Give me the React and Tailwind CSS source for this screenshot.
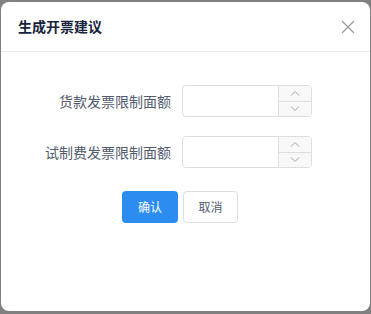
import React from 'react';

function Stepper() {
  return (
    <div className="flex w-[130px] h-[32px] border border-[#dcdee2] rounded-[4px] overflow-hidden bg-white">
      <input className="flex-1 min-w-0 outline-none px-2 text-[13px]" />
      <div className="w-[33px] flex flex-col border-l border-[#dcdee2] bg-[#f8f8f9]">
        <div className="flex-1 flex items-center justify-center border-b border-[#dcdee2]">
          <svg width="10" height="6" viewBox="0 0 10 6" fill="none" stroke="#a0a4ab" strokeWidth="1">
            <path d="M1 5.5 L5 1.5 L9 5.5" />
          </svg>
        </div>
        <div className="flex-1 flex items-center justify-center">
          <svg width="10" height="6" viewBox="0 0 10 6" fill="none" stroke="#a0a4ab" strokeWidth="1">
            <path d="M1 0.5 L5 4.5 L9 0.5" />
          </svg>
        </div>
      </div>
    </div>
  );
}

export default function App() {
  const rows = ['货款发票限制面额', '试制费发票限制面额'];
  return (
    <div
      className="w-[371px] h-[314px] bg-[#808080] pt-[2px] pl-[1px] pr-[1px] pb-[3px]"
      style={{ fontFamily: '"Noto Sans CJK SC", "Noto Sans", sans-serif' }}
    >
      <div className="h-full bg-white rounded-[8px] flex flex-col">
        {/* Header */}
        <div className="h-[50px] flex items-center justify-between pl-[17px] pr-[15px] border-b border-[#e8eaec]">
          <span className="text-[14px] font-bold text-[#17233c]">生成开票建议</span>
          <svg width="14" height="14" viewBox="0 0 14 14" stroke="#999" strokeWidth="1.2">
            <path d="M1 1 L13 13 M13 1 L1 13" />
          </svg>
        </div>

        {/* Body */}
        <div className="flex flex-col pt-[33px] gap-[19px]">
          {rows.map((label) => (
            <div key={label} className="flex items-center">
              <label className="w-[170px] text-right text-[14px] text-[#515a6e]">{label}</label>
              <div className="ml-[11px]">
                <Stepper />
              </div>
            </div>
          ))}
        </div>

        <div className="flex gap-[5px] pl-[121px] mt-[23px]">
          <button className="w-[56px] h-[32px] rounded-[4px] bg-[#2d8cf0] text-white text-[12px]">确认</button>
          <button className="w-[55px] h-[32px] rounded-[4px] border border-[#dcdee2] bg-white text-[#515a6e] text-[12px]">取消</button>
        </div>
      </div>
    </div>
  );
}
